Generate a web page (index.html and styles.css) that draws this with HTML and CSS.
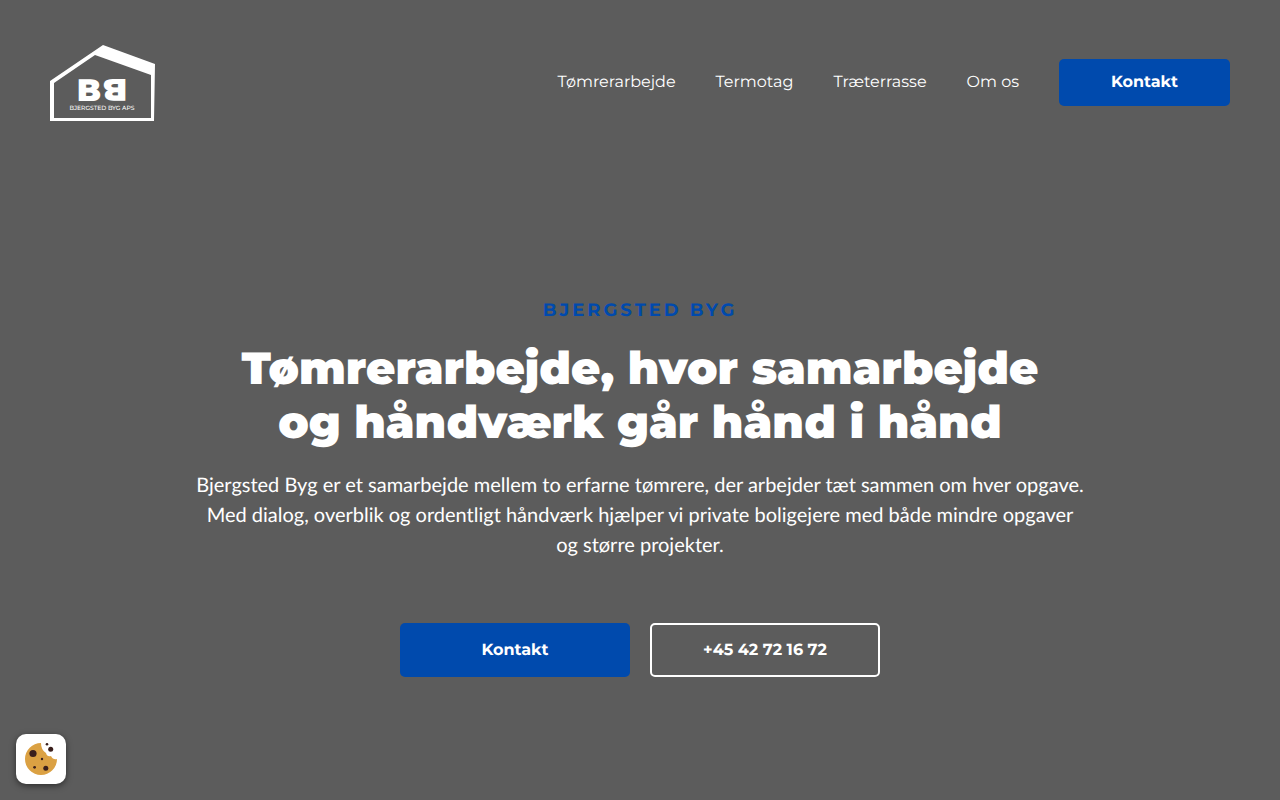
FILE: index.html
```html
<!DOCTYPE html>
<html lang="da">
<head>
<meta charset="UTF-8">
<meta name="viewport" content="width=device-width, initial-scale=1.0">
<title>Bjergsted Byg</title>
<link rel="stylesheet" href="styles.css">
</head>
<body>

<header class="header">
  <a class="logo" href="#" aria-label="Bjergsted Byg">
    <svg width="105" height="77" viewBox="0 0 105 77">
      <path fill="#fff" fill-rule="evenodd" d="M53 1 L105 20 L104 77 H0 V37 Z M45 11 L4 39 V74 H101 V31 Z"/>
      <text class="logo-mark" x="27" y="57">B</text>
      <text class="logo-mark" x="27" y="57" transform="rotate(180 52 46)">B</text>
      <text class="logo-name" x="52" y="66" text-anchor="middle">BJERGSTED BYG APS</text>
    </svg>
  </a>
  <nav class="nav">
    <a href="#tomrer">Tømrerarbejde</a>
    <a href="#termotag">Termotag</a>
    <a href="#terrasse">Træterrasse</a>
    <a href="#om">Om os</a>
    <a class="btn btn-small" href="#kontakt">Kontakt</a>
  </nav>
</header>

<main class="hero">
  <p class="subtitle">BJERGSTED BYG</p>
  <h1>Tømrerarbejde, hvor samarbejde<br>og håndværk går hånd i hånd</h1>
  <p class="intro">Bjergsted Byg er et samarbejde mellem to erfarne tømrere, der arbejder tæt sammen om hver opgave. Med dialog, overblik og ordentligt håndværk hjælper vi private boligejere med både mindre opgaver og&nbsp;større projekter.</p>
  <div class="actions">
    <a class="btn" href="#kontakt">Kontakt</a>
    <a class="btn btn-outline" href="tel:+4542721672">+45 42 72 16 72</a>
  </div>
</main>

<button class="cookie" type="button" aria-label="Cookies">
  <svg width="32" height="32" viewBox="0 0 32 32">
    <path fill="#dba143" d="M16 0 A16 16 0 1 0 32 16 Q28 17 26 13 Q22 14 21 10 Q16 7 16 0 Z"/>
    <g fill="#3a1f1c">
      <circle cx="8" cy="10.500" r="3.600"/>
      <circle cx="25.700" cy="6.300" r="2.500"/>
      <circle cx="22" cy="1.300" r="1.300"/>
      <circle cx="17" cy="16" r="1.200"/>
      <circle cx="9.600" cy="24.300" r="1.400"/>
      <circle cx="20.800" cy="25.300" r="2.500"/>
    </g>
  </svg>
</button>

</body>
</html>
```
FILE: styles.css
```css
* {
  box-sizing: border-box;
}
body {
  margin: 0;
  min-height: 100vh;
  background-color: #5c5c5c;
  color: #fff;
  font-family: Montserrat, Inter, sans-serif;
  font-size: 16px;
  text-rendering: geometricPrecision;
}
a {
  color: #fff;
  text-decoration: none;
}
.header {
  display: flex;
  align-items: center;
  justify-content: space-between;
  padding: 44px 50px;
}
.logo svg {
  display: block;
}
.logo-mark {
  fill: #fff;
  font: 900 31px Montserrat, "DejaVu Sans", sans-serif;
}
.logo-name {
  fill: #fff;
  font: 500 6px Montserrat, "DejaVu Sans", sans-serif;
}
.nav {
  display: flex;
  align-items: center;
  gap: 40px;
}
.btn {
  display: flex;
  align-items: center;
  justify-content: center;
  width: 230px;
  height: 54px;
  background-color: #004aad;
  border-radius: 5px;
  font-weight: 700;
}
.btn-small {
  width: 171px;
  height: 47px;
}
.btn-outline {
  background-color: transparent;
  border: 2px solid #fff;
}
.hero {
  display: flex;
  flex-direction: column;
  align-items: center;
  max-width: 928px;
  margin: 0 auto;
  padding: 133px 16px 60px;
  text-align: center;
}
.subtitle {
  margin: 0 0 20px;
  color: #004aad;
  font-size: 18px;
  font-weight: 700;
  line-height: 24px;
  letter-spacing: 3px;
}
h1 {
  margin: 0 0 20px;
  font-size: 45px;
  font-weight: 900;
  line-height: 54px;
}
.intro {
  margin: 0 0 63px;
  font-family: Lato, sans-serif;
  font-size: 20px;
  line-height: 30px;
}
.actions {
  display: flex;
  flex-wrap: wrap;
  justify-content: center;
  gap: 20px;
}
.cookie {
  position: fixed;
  left: 16px;
  bottom: 16px;
  display: flex;
  align-items: center;
  justify-content: center;
  width: 50px;
  height: 50px;
  padding: 0;
  background-color: #fff;
  border: none;
  border-radius: 10px;
  box-shadow: 0 2px 6px rgba(0, 0, 0, 0.5);
  cursor: pointer;
}
```
